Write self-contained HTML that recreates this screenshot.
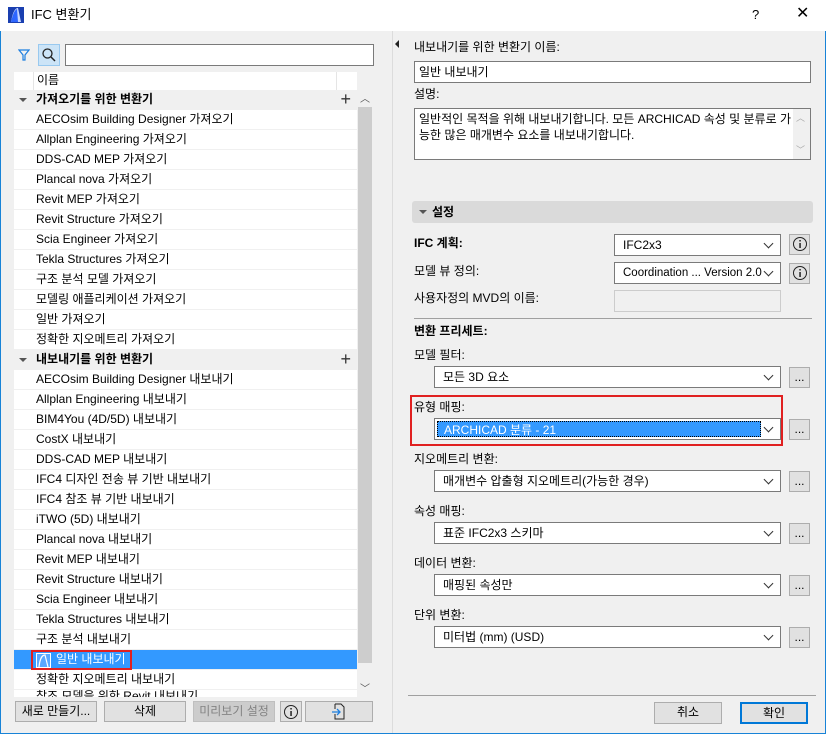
<!DOCTYPE html>
<html><head><meta charset="utf-8"><style>
*{box-sizing:border-box;margin:0;padding:0}
body{width:826px;height:734px;background:#f0f0f0;font-family:"Liberation Sans","Noto Sans CJK KR",sans-serif;font-size:12px;color:#000;position:relative;overflow:hidden}
.a{position:absolute}
.t{position:absolute;white-space:nowrap;line-height:20px}
.box{position:absolute;background:#fff;border:1px solid #7a7a7a}
.dd{position:absolute;background:#fff;border:1px solid #7a7a7a;height:22px;line-height:20px;padding-left:8px;padding-right:24px;white-space:nowrap;overflow:hidden}
.dd:after{content:"";position:absolute;right:8px;top:5px;width:6px;height:6px;border-right:1px solid #333;border-bottom:1px solid #333;transform:rotate(45deg)}
.btn{position:absolute;background:#e1e1e1;border:1px solid #adadad;text-align:center;line-height:19px;height:21px}
.row{position:absolute;left:14px;width:343px;height:20px;line-height:19px;padding-left:22px;border-bottom:1px solid #f0f0f0;background:#fff;white-space:nowrap}
.grp{background:#f0f0f0;font-weight:bold;padding-left:22px}
.grp:before{content:"";position:absolute;left:5px;top:8px;border-left:4px solid transparent;border-right:4px solid transparent;border-top:4px solid #555}
.plus{position:absolute;right:6px;top:0;font-size:18px;font-weight:normal;line-height:19px;color:#333}
</style></head><body>
<div class="a" style="left:0;top:0;width:826px;height:31px;background:#fff"></div>
<svg class="a" style="left:8px;top:7px" width="16" height="16"><rect x="0" y="0" width="16" height="16" fill="#1a3fb0"/><path d="M3 15 C5 3 8 1 10 1 L13 15Z" fill="#c9d8ff"/><path d="M3 15 C5 6 7 3 9 2 L10 15Z" fill="#2e66ff"/></svg>
<div class="t" style="left:31px;top:5px;font-size:13px">IFC 변환기</div>
<div class="t" style="left:752px;top:5px;font-size:13px">?</div>
<div class="t" style="left:796px;top:4px;font-size:16px">✕</div>
<div class="a" style="left:0;top:31px;width:1px;height:703px;background:#1883d7"></div>
<div class="a" style="right:0;top:31px;width:1px;height:703px;background:#1883d7"></div>
<div class="a" style="left:0;top:733px;width:826px;height:1px;background:#1883d7"></div>

<svg class="a" style="left:18px;top:48px" width="12" height="14"><path d="M1 2 H11 L7 7 V12 L5 12 V7Z" fill="none" stroke="#1e7fe0" stroke-width="1.2"/></svg>
<div class="a" style="left:38px;top:44px;width:22px;height:22px;background:#cce4f7;border:1px solid #99c9ef"></div>
<svg class="a" style="left:41px;top:47px" width="16" height="16"><circle cx="6.5" cy="6.5" r="4.5" fill="none" stroke="#222" stroke-width="1.3"/><path d="M10 10 L14 14" stroke="#222" stroke-width="1.5"/></svg>
<div class="box" style="left:65px;top:44px;width:309px;height:22px"></div>

<div class="a" style="left:14px;top:72px;width:343px;height:18px;background:#fff"></div>
<div class="a" style="left:33px;top:72px;width:1px;height:18px;background:#e5e5e5"></div>
<div class="a" style="left:336px;top:72px;width:1px;height:18px;background:#e5e5e5"></div>
<div class="t" style="left:37px;top:70px">이름</div>

<div class="row grp" style="top:90px">가져오기를 위한 변환기<span class="plus">+</span></div>
<div class="row" style="top:110px">AECOsim Building Designer 가져오기</div>
<div class="row" style="top:130px">Allplan Engineering 가져오기</div>
<div class="row" style="top:150px">DDS-CAD MEP 가져오기</div>
<div class="row" style="top:170px">Plancal nova 가져오기</div>
<div class="row" style="top:190px">Revit MEP 가져오기</div>
<div class="row" style="top:210px">Revit Structure 가져오기</div>
<div class="row" style="top:230px">Scia Engineer 가져오기</div>
<div class="row" style="top:250px">Tekla Structures 가져오기</div>
<div class="row" style="top:270px">구조 분석 모델 가져오기</div>
<div class="row" style="top:290px">모델링 애플리케이션 가져오기</div>
<div class="row" style="top:310px">일반 가져오기</div>
<div class="row" style="top:330px">정확한 지오메트리 가져오기</div>
<div class="row grp" style="top:350px">내보내기를 위한 변환기<span class="plus">+</span></div>
<div class="row" style="top:370px">AECOsim Building Designer 내보내기</div>
<div class="row" style="top:390px">Allplan Engineering 내보내기</div>
<div class="row" style="top:410px">BIM4You (4D/5D) 내보내기</div>
<div class="row" style="top:430px">CostX 내보내기</div>
<div class="row" style="top:450px">DDS-CAD MEP 내보내기</div>
<div class="row" style="top:470px">IFC4 디자인 전송 뷰 기반 내보내기</div>
<div class="row" style="top:490px">IFC4 참조 뷰 기반 내보내기</div>
<div class="row" style="top:510px">iTWO (5D) 내보내기</div>
<div class="row" style="top:530px">Plancal nova 내보내기</div>
<div class="row" style="top:550px">Revit MEP 내보내기</div>
<div class="row" style="top:570px">Revit Structure 내보내기</div>
<div class="row" style="top:590px">Scia Engineer 내보내기</div>
<div class="row" style="top:610px">Tekla Structures 내보내기</div>
<div class="row" style="top:630px">구조 분석 내보내기</div>
<div class="row" style="top:650px;background:#3399ff;color:#fff;padding-left:42px">일반 내보내기</div>
<div class="a" style="left:31px;top:650px;width:101px;height:20px;border:2px solid #e02020"></div>
<svg class="a" style="left:36px;top:653px" width="15" height="15"><rect x="0.5" y="0.5" width="14" height="14" fill="#5aa8ff" stroke="#fff"/><path d="M3 14 C4 4 7 2 9 2 L12 14" fill="none" stroke="#fff" stroke-width="1.2"/></svg>
<div class="row" style="top:670px">정확한 지오메트리 내보내기</div>
<div class="row" style="top:690px;height:8px;overflow:hidden;line-height:12px">참조 모델을 위한 Revit 내보내기</div>
<div class="a" style="left:14px;top:698px;width:360px;height:3px;background:#f0f0f0"></div>
<div class="a" style="left:357px;top:90px;width:16px;height:608px;background:#f0f0f0"></div>
<div class="a" style="left:358px;top:107px;width:14px;height:556px;background:#cdcdcd"></div>
<div class="t" style="left:360px;top:90px;font-size:10px;color:#555">︿</div>
<div class="t" style="left:360px;top:680px;font-size:10px;color:#555">﹀</div>

<div class="btn" style="left:15px;top:701px;width:82px">새로 만들기...</div>
<div class="btn" style="left:104px;top:701px;width:82px">삭제</div>
<div class="btn" style="left:193px;top:701px;width:82px;background:#cccccc;border-color:#bfbfbf;color:#838383">미리보기 설정</div>
<div class="btn" style="left:280px;top:701px;width:22px"><svg width="16" height="16" style="margin-top:2px"><circle cx="8" cy="8" r="6.5" fill="none" stroke="#222"/><rect x="7.3" y="7" width="1.5" height="5" fill="#222"/><rect x="7.3" y="4" width="1.5" height="1.5" fill="#222"/></svg></div>
<div class="btn" style="left:305px;top:701px;width:68px"><svg width="16" height="18" style="margin-top:1px"><path d="M4 1 H10 L13 4 V16 H4 V11 M4 6 V1" fill="none" stroke="#222"/><path d="M1 9 H9 M6 6 L9 9 L6 12" fill="none" stroke="#1e7fe0" stroke-width="1.3"/></svg></div>

<div class="a" style="left:392px;top:31px;width:1px;height:702px;background:#dcdcdc"></div>
<div class="a" style="left:395px;top:40px;border-top:4px solid transparent;border-bottom:4px solid transparent;border-right:4px solid #222"></div>

<div class="t" style="left:414px;top:37px">내보내기를 위한 변환기 이름:</div>
<div class="box" style="left:414px;top:61px;width:397px;height:22px;line-height:20px;padding-left:4px">일반 내보내기</div>
<div class="t" style="left:414px;top:84px">설명:</div>
<div class="box" style="left:414px;top:108px;width:397px;height:52px;padding:2px 18px 0 4px;line-height:16px;white-space:normal;word-break:break-all">일반적인 목적을 위해 내보내기합니다. 모든 ARCHICAD 속성 및 분류로 가능한 많은 매개변수 요소를 내보내기합니다.</div>
<div class="a" style="left:793px;top:109px;width:17px;height:50px;background:#f0f0f0"></div>
<div class="t" style="left:796px;top:108px;font-size:9px;color:#aaa">︿</div>
<div class="t" style="left:796px;top:140px;font-size:9px;color:#aaa">﹀</div>

<div class="a" style="left:412px;top:201px;width:401px;height:22px;background:#dadada;border-radius:3px"></div>
<div class="a" style="left:419px;top:210px;border-left:4px solid transparent;border-right:4px solid transparent;border-top:4px solid #555"></div>
<div class="t" style="left:432px;top:202px;font-weight:bold">설정</div>

<div class="t" style="left:414px;top:233px;font-weight:bold">IFC 계획:</div>
<div class="dd" style="left:614px;top:234px;width:167px">IFC2x3</div>
<div class="btn" style="left:789px;top:234px;width:21px;height:21px;padding-top:1px"><svg width="16" height="16"><circle cx="8" cy="8" r="6.5" fill="none" stroke="#222"/><rect x="7.3" y="7" width="1.5" height="5" fill="#222"/><rect x="7.3" y="4" width="1.5" height="1.5" fill="#222"/></svg></div>
<div class="t" style="left:414px;top:261px">모델 뷰 정의:</div>
<div class="dd" style="left:614px;top:262px;width:167px;font-size:11.5px">Coordination ... Version 2.0</div>
<div class="btn" style="left:789px;top:263px;width:21px;height:21px;padding-top:1px"><svg width="16" height="16"><circle cx="8" cy="8" r="6.5" fill="none" stroke="#222"/><rect x="7.3" y="7" width="1.5" height="5" fill="#222"/><rect x="7.3" y="4" width="1.5" height="1.5" fill="#222"/></svg></div>
<div class="t" style="left:414px;top:288px">사용자정의 MVD의 이름:</div>
<div class="a" style="left:614px;top:290px;width:167px;height:22px;background:#f0f0f0;border:1px solid #ccc"></div>
<div class="a" style="left:414px;top:318px;width:398px;height:1px;background:#a0a0a0"></div>
<div class="t" style="left:414px;top:321px;font-weight:bold">변환 프리세트:</div>

<div class="t" style="left:414px;top:345px">모델 필터:</div>
<div class="dd" style="left:434px;top:366px;width:347px">모든 3D 요소</div>
<div class="btn" style="left:789px;top:367px;width:21px">...</div>
<div class="t" style="left:414px;top:397px">유형 매핑:</div>
<div class="a" style="left:410px;top:395px;width:373px;height:51px;border:2px solid #e02020"></div>
<div class="dd" style="left:434px;top:418px;width:347px;padding:2px"><div style="background:#3399ff;color:#fff;height:16px;line-height:16px;width:324px;padding-left:6px;border:1px dotted #000">ARCHICAD 분류 - 21</div></div>
<div class="btn" style="left:789px;top:419px;width:21px">...</div>
<div class="t" style="left:414px;top:449px">지오메트리 변환:</div>
<div class="dd" style="left:434px;top:470px;width:347px">매개변수 압출형 지오메트리(가능한 경우)</div>
<div class="btn" style="left:789px;top:471px;width:21px">...</div>
<div class="t" style="left:414px;top:501px">속성 매핑:</div>
<div class="dd" style="left:434px;top:522px;width:347px">표준 IFC2x3 스키마</div>
<div class="btn" style="left:789px;top:523px;width:21px">...</div>
<div class="t" style="left:414px;top:553px">데이터 변환:</div>
<div class="dd" style="left:434px;top:574px;width:347px">매핑된 속성만</div>
<div class="btn" style="left:789px;top:575px;width:21px">...</div>
<div class="t" style="left:414px;top:605px">단위 변환:</div>
<div class="dd" style="left:434px;top:626px;width:347px">미터법 (mm) (USD)</div>
<div class="btn" style="left:789px;top:627px;width:21px">...</div>

<div class="a" style="left:408px;top:695px;width:408px;height:1px;background:#a0a0a0"></div>
<div class="btn" style="left:654px;top:702px;width:68px;height:22px">취소</div>
<div class="btn" style="left:740px;top:702px;width:68px;height:22px;border:2px solid #0078d7;line-height:18px">확인</div>
</body></html>
